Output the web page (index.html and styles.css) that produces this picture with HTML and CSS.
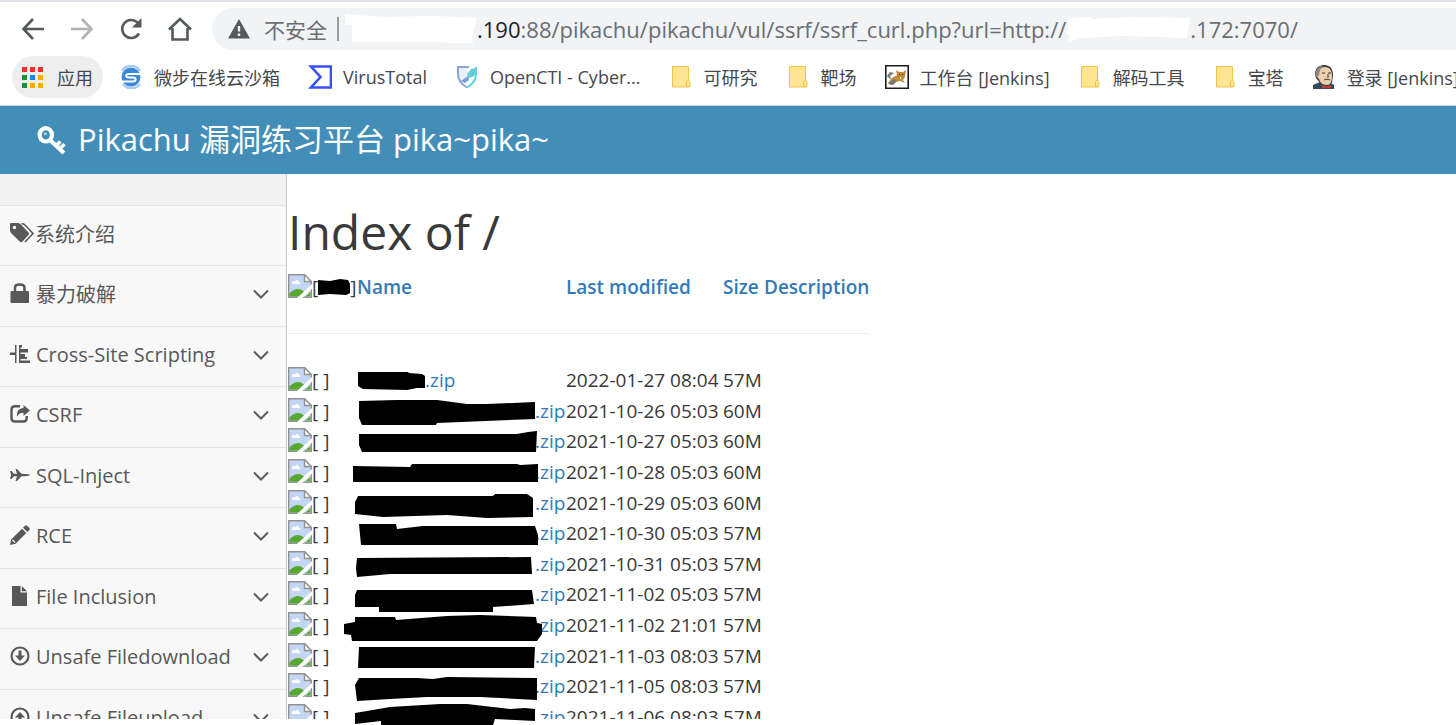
FILE: index.html
```html
<!DOCTYPE html>
<html lang="zh-CN">
<head>
  <meta charset="UTF-8">
  <meta name="viewport" content="width=device-width, initial-scale=1.0">
  <title>Pikachu</title>
  <link rel="stylesheet" href="styles.css">
</head>
<body>
  <!-- shared icons -->
  <svg class="sprite" aria-hidden="true">
    <symbol id="folder" viewBox="0 0 24 24">
      <path d="M3.5 1.5h16v14.500l1 .500v5.500h-17z" fill="#ffe591" stroke="#efc44c"/>
      <path d="M17.500 21.500v-5l1.500-1.500 2 1.500v5z" fill="#ffe591" stroke="#efc44c"/>
    </symbol>
    <symbol id="broken" viewBox="0 0 24 24">
      <path d="M.7.7h15.800l6.800 6.800v15.800H.7z" fill="#c3d6f5" stroke="#929292" stroke-width="1.400"/>
      <path d="M4 9c0-2 2-2.500 3-1.500 1-2 4-1.500 4 .500 2 0 2 2 0 2H5C3.500 10 3 9 4 9z" fill="#fff"/>
      <path d="M1.400 22.600v-3c5-6 11-6 15-1.500v4.500z" fill="#56a832"/>
      <path d="M16.500.7v6.800h6.800z" fill="#fff" stroke="#929292" stroke-width="1.400"/>
      <path d="M24 10v4.500L14.500 24H9z" fill="#fff"/>
      <path d="M24 18v6h-8z" fill="#fff"/>
      <path d="M17 23.300h6.300V18" fill="none" stroke="#929292" stroke-width="1.400"/>
      <path d="M17.500 22.600h5V18z" fill="#56a832"/>
    </symbol>
    <symbol id="chevron" viewBox="0 0 16 10">
      <path d="M1 1.500l7 7 7-7" fill="none" stroke="#5c5c5c" stroke-width="2"/>
    </symbol>
  </svg>

  <div class="toolbar">
    <button class="nav-btn" aria-label="后退"><svg viewBox="0 0 24 24"><path d="M23 12H3M12 2L2.500 12l9.500 10" class="line"/></svg></button>
    <button class="nav-btn disabled" aria-label="前进"><svg viewBox="0 0 24 24"><path d="M1 12h20M12 2l9.500 10L12 22" class="line"/></svg></button>
    <button class="nav-btn" aria-label="重新加载"><svg viewBox="0 0 24 24"><path d="M20 16.500a9 9 0 1 1-1.500-11" class="line"/><path d="M22.500 1v9.500H13z" fill="#55585c"/></svg></button>
    <button class="nav-btn" aria-label="主页"><svg viewBox="0 0 24 24"><path d="M1 12.500L12 2l11 10.500M4.500 11v11.500h15V11" class="line"/></svg></button>
    <div class="omnibox">
      <button class="security">
        <svg viewBox="0 0 22 20"><path d="M11 0l11 19.500H0z" fill="#55585c"/><path d="M9.800 7h2.400v5.500H9.800zM9.800 14.500h2.400v2.500H9.800z" fill="#f1f3f4"/></svg>
        不安全
      </button>
      <span class="divider"></span>
      <div class="url">
        <svg class="mask mask-host" viewBox="0 0 132 30"><path d="M0 0l40 3 50-1 42 2-5 20 1 5-25 0-6-1-90 0V11H0z" fill="#fff"/></svg>
        <span><b>.190</b>:88/pikachu/pikachu/vul/ssrf/ssrf_curl.php?url=http://</span>
        <svg class="mask mask-param" viewBox="0 0 124 30"><path d="M3 4l22-1v2l40-2 59 1-3 20-64-2-42 2-10 3H3v-6l-3-1z" fill="#fff"/></svg>
        <span>.172:7070/</span>
      </div>
    </div>
  </div>

  <nav class="bookmarks">
    <a class="apps" href="#">
      <svg viewBox="0 0 21 21"><path d="M0 0h5v5H0zM8 0h5v5H8zM16 0h5v5h-5z" fill="#ea3323"/><path d="M0 8h5v5H0zM0 16h5v5H0z" fill="#1e8e3e"/><path d="M8 8h5v5H8z" fill="#1a83f0"/><path d="M16 8h5v5h-5zM8 16h5v5H8zM16 16h5v5h-5z" fill="#f9ab00"/></svg>
      应用
    </a>
    <a href="#">
      <svg viewBox="0 0 24 24"><circle cx="12" cy="12" r="9.500" fill="#3f87d8"/><path d="M3 6A10.500 10.500 0 0 1 21 6M21 19A10.500 10.500 0 0 1 4 19" fill="none" stroke="#a9cdf2" stroke-width="2.500"/><path d="M22 9H10c-4 0-3.500 3.500 0 3.500h4c3.500 0 3.500 4 0 4H2" fill="none" stroke="#fff" stroke-width="2"/></svg>
      微步在线云沙箱
    </a>
    <a href="#">
      <svg viewBox="0 0 24 24"><path d="M3 1.500h20v21H3L12.500 12z" fill="none" stroke="#394eff" stroke-width="2.600"/></svg>
      VirusTotal
    </a>
    <a href="#">
      <svg viewBox="0 0 24 24"><path d="M3 2h9v12l-6 4c-2-3-3-6-3-9z" fill="#e8eefb"/><path d="M14 2H3v7c0 6 3 10 9 13.500" fill="none" stroke="#8aa2d8" stroke-width="2"/><path d="M12 22.500C18 19 21 15 21 9V2" fill="none" stroke="#58d0e6" stroke-width="2"/><path d="M21 3l-5 1-4 5 1 4 5-1 3-4zM12 12l-5 4 3 2 4-3z" fill="#65cbdc"/><path d="M13 11l-7 5 4 2 4-4z" fill="#829dd2"/></svg>
      OpenCTI - Cyber...
    </a>
    <a href="#"><svg><use href="#folder"/></svg>可研究</a>
    <a href="#"><svg><use href="#folder"/></svg>靶场</a>
    <a href="#">
      <svg viewBox="0 0 24 24"><path d="M.8.8h22.400v22.400H.8z" fill="#fff" stroke="#1c1c1c" stroke-width="1.600"/><path d="M3 18l4-5 5-3-1-5 3 2h4l3-2-1 7-2 3 2 3-5-2-4 1-4 3z" fill="#c08c3a"/><path d="M2 11l3-4 4 1-4 3 1 4zM3 19l5-5 4 2-4 4z" fill="#777"/><path d="M14 9h1v1h-1zM17 9h1v1h-1z" fill="#222"/><path d="M15 12l2 1-2 1z" fill="#fff"/></svg>
      工作台 [Jenkins]
    </a>
    <a href="#"><svg><use href="#folder"/></svg>解码工具</a>
    <a href="#"><svg><use href="#folder"/></svg>宝塔</a>
    <a href="#">
      <svg viewBox="0 0 24 24"><path d="M1 24v-4l7-3h9l5 3v4z" fill="#2f4b5e"/><path d="M4 13C1 5 6 0 12 0s9 4 9 10l-1 8-5 3-6-2z" fill="#3b3b3b"/><path d="M5 12c0-6 3-10 8-10 5 0 7 4 7 9 0 6-2 9-5 9-5 0-7-3-8-6z" fill="#eccfae"/><path d="M4 6c1-3 4-5 7-5L8 5l-1 5-1 2H4z" fill="#8a8a86"/><path d="M10 8h3M16 8h3M12 15c2-1 4-1 6 0M16 9v4" stroke="#45372c" fill="none"/><path d="M10 20l4 1.500 5-1.500v4l-5-1.500-4 1.500z" fill="#d33833"/></svg>
      登录 [Jenkins]
    </a>
  </nav>

  <header class="site-header">
    <svg class="key" viewBox="0 0 28 28"><ellipse cx="8.500" cy="8.500" rx="6" ry="6.500" fill="none" stroke="#fff" stroke-width="4"/><path d="M11.500 12.500L26 26" stroke="#fff" stroke-width="4"/><path d="M18.500 19l4-4M21.500 22.500l5-5" stroke="#fff" stroke-width="3.400"/><path d="M1.500 4l5-3.500-4 15z" fill="#fff"/><circle cx="8" cy="7.500" r="1.500" fill="#fff" opacity=".6"/></svg>
    <span>Pikachu 漏洞练习平台 pika~pika~</span>
  </header>

  <div class="page">
    <aside class="sidebar">
      <div class="sidebar-top"></div>
      <ul class="menu">
        <li><a href="#">
          <svg class="icon wide" viewBox="0 0 25 20"><path d="M0 1.500C0 .500.500 0 1.500 0H8c1 0 2 .500 3 1.500l7.500 8c.800 1 .800 1.500 0 2.500l-6 6.500c-1 1-1.800 1-2.800 0L1.500 10.500C.500 9.500 0 8.500 0 7.500z"/><circle cx="4.500" cy="4.500" r="1.700" fill="#f8f8f8"/><path d="M11.500 0.500c2 0 3 1 4 2l7.500 8-8 8.500" fill="none" stroke="#585858" stroke-width="1.600"/></svg>
          系统介绍</a></li>
        <li><a href="#">
          <svg class="icon" viewBox="0 0 20 20"><path d="M2 8h15.500c1 0 1.500.500 1.500 1.500v9c0 1-.500 1.500-1.500 1.500H2c-1 0-1.500-.500-1.500-1.500v-9C.500 8.500 1 8 2 8z"/><path d="M5 9V4.500C5 2.500 6.500 1.500 9.500 1.500S14.500 2.500 14.500 4.500V9" fill="none" stroke="#585858" stroke-width="2.500"/></svg>
          暴力破解<svg class="arrow"><use href="#chevron"/></svg></a></li>
        <li><a href="#">
          <svg class="icon" viewBox="0 0 20 20"><path d="M0 8.500h6v2.500H0zM5 1h1.500v18H5zM9 1h1.500v18H9zM10 1h2v2.500h-2zM10 5h8v3.500h-8zM10 10h5v3h-5zM10 13h7v2h-7zM9 16.500h11V19H9z"/></svg>
          Cross-Site Scripting<svg class="arrow"><use href="#chevron"/></svg></a></li>
        <li><a href="#">
          <svg class="icon" viewBox="0 0 20 20"><path d="M10 2.200H5C2.500 2.200 1.500 3.500 1.500 5.500v8.500c0 2.500 1.500 3.500 3.500 3.500h8.500c2 0 3.200-1 3.200-3.500v-2" fill="none" stroke="#585858" stroke-width="2.400"/><path d="M13.500 1l6.500 5.500-6.500 5.500V8.800c-3 0-5 1-6.500 4-.500-5.500 2-8.500 6.500-8.700z"/></svg>
          CSRF<svg class="arrow"><use href="#chevron"/></svg></a></li>
        <li><a href="#">
          <svg class="icon" viewBox="0 0 20 20"><path d="M0 6h1.500l2.500 2.800h3L5.500 4H7l4.500 4.700c4 .1 8.500.5 8.500 1.300s-4.500 1.200-8.500 1.300L7 16H5.500L7 11.200H4L1.500 14H0l1-3.500v-1z"/></svg>
          SQL-Inject<svg class="arrow"><use href="#chevron"/></svg></a></li>
        <li><a href="#">
          <svg class="icon" viewBox="0 0 20 20"><path d="M0 20l1.200-5.500L12 3.700l4.300 4.300L5.500 18.800zM13 2.700L15 .700c.700-.700 1.300-.700 2 0L19.300 3c.700.700.700 1.300 0 2l-2 2z"/><path d="M2.500 15l2.500 2.500" stroke="#f8f8f8" stroke-width="1.300"/></svg>
          RCE<svg class="arrow"><use href="#chevron"/></svg></a></li>
        <li><a href="#">
          <svg class="icon" viewBox="0 0 20 20"><path d="M2 0h8.500v6.500H17V20H2z"/><path d="M11.800 0L17 5.200h-5.200z"/></svg>
          File Inclusion<svg class="arrow"><use href="#chevron"/></svg></a></li>
        <li><a href="#">
          <svg class="icon" viewBox="0 0 20 20"><circle cx="10" cy="10" r="8.500" fill="none" stroke="#585858" stroke-width="2.200"/><path d="M8.500 4.500h3V9.500h3.500L10 15 5 9.500h3.500z"/></svg>
          Unsafe Filedownload<svg class="arrow"><use href="#chevron"/></svg></a></li>
        <li><a href="#">
          <svg class="icon" viewBox="0 0 20 20"><circle cx="10" cy="10" r="8.500" fill="none" stroke="#585858" stroke-width="2.200"/><path d="M8.500 15.500h3V10.500h3.500L10 5 5 10.500h3.500z"/></svg>
          Unsafe Fileupload<svg class="arrow"><use href="#chevron"/></svg></a></li>
      </ul>
    </aside>

    <main class="content">
      <h1>Index of /</h1>
      <table class="listing">
        <colgroup>
          <col class="col-icon"><col class="col-name"><col class="col-date"><col class="col-size"><col class="col-desc">
        </colgroup>
        <thead>
          <tr>
            <th><div class="cell"><svg class="broken"><use href="#broken"/></svg>[<svg class="blot blot-ico" viewBox="0 0 32 30"><path d="M0 8l12 1 10-2 8 1 2 4v9l-4 2-16-1-12 1z"/></svg>]</div></th>
            <th><a href="#">Name</a></th>
            <th><a href="#">Last modified</a></th>
            <th><a href="#">Size</a></th>
            <th><a href="#">Description</a></th>
          </tr>
          <tr><td colspan="5"><hr></td></tr>
        </thead>
        <tbody>
          <tr>
            <td><div class="cell"><svg class="broken"><use href="#broken"/></svg>[ ]</div></td>
            <td><a class="cell" href="#"><svg class="blot short" viewBox="0 0 68 30"><path d="M1 7h50l1 1 13 1 3 2v12h-8l-10 2-44-1-5-3z"/></svg>.zip</a></td>
            <td>2022-01-27 08:04</td><td>57M</td><td></td>
          </tr>
          <tr>
            <td><div class="cell"><svg class="broken"><use href="#broken"/></svg>[ ]</div></td>
            <td><a class="cell" href="#"><svg class="blot" viewBox="0 0 178 30"><path d="M2 5L40 4h40l30 4h20l48-2v17l-98 4-1 2H5l-3-7z"/></svg>.zip</a></td>
            <td>2021-10-26 05:03</td><td>60M</td><td></td>
          </tr>
          <tr>
            <td><div class="cell"><svg class="broken"><use href="#broken"/></svg>[ ]</div></td>
            <td><a class="cell" href="#"><svg class="blot" viewBox="0 0 178 30"><path d="M2 8h158l11-2 9-1-1 21H5l-3-7z"/></svg>.zip</a></td>
            <td>2021-10-27 05:03</td><td>60M</td><td></td>
          </tr>
          <tr>
            <td><div class="cell"><svg class="broken"><use href="#broken"/></svg>[ ]</div></td>
            <td><a class="cell" href="#"><svg class="blot" viewBox="0 0 178 30"><path d="M-4 9l57 1 2-3h105l3 1 18-1v18H-4z"/></svg>.zip</a></td>
            <td>2021-10-28 05:03</td><td>60M</td><td></td>
          </tr>
          <tr>
            <td><div class="cell"><svg class="broken"><use href="#broken"/></svg>[ ]</div></td>
            <td><a class="cell" href="#"><svg class="blot" viewBox="0 0 178 30"><path d="M1 8h135l2-2h32l6 4v19l-46 1-40-3-64 2-28-3V14z"/></svg>.zip</a></td>
            <td>2021-10-29 05:03</td><td>60M</td><td></td>
          </tr>
          <tr>
            <td><div class="cell"><svg class="broken"><use href="#broken"/></svg>[ ]</div></td>
            <td><a class="cell" href="#"><svg class="blot" viewBox="0 0 178 30"><path d="M2 6h37l1 5 26-3h112l3 9v10H4z"/></svg>.zip</a></td>
            <td>2021-10-30 05:03</td><td>57M</td><td></td>
          </tr>
          <tr>
            <td><div class="cell"><svg class="broken"><use href="#broken"/></svg>[ ]</div></td>
            <td><a class="cell" href="#"><svg class="blot" viewBox="0 0 178 30"><path d="M0 9l174-1 1 17H33L0 28l-1-9z"/></svg>.zip</a></td>
            <td>2021-10-31 05:03</td><td>57M</td><td></td>
          </tr>
          <tr>
            <td><div class="cell"><svg class="broken"><use href="#broken"/></svg>[ ]</div></td>
            <td><a class="cell" href="#"><svg class="blot" viewBox="0 0 178 30"><path d="M0 11h175l2 14-41 3v5H22v-5H-2V16z"/></svg>.zip</a></td>
            <td>2021-11-02 05:03</td><td>57M</td><td></td>
          </tr>
          <tr>
            <td><div class="cell"><svg class="broken"><use href="#broken"/></svg>[ ]</div></td>
            <td><a class="cell" href="#"><svg class="blot" viewBox="0 0 178 30"><path d="M-2 7h40l1 3 51-4 33-1 56 2 1 6 5 1v10l-5 7H-5l-1-6-7-1V14l11-2z"/></svg>.zip</a></td>
            <td>2021-11-02 21:01</td><td>57M</td><td></td>
          </tr>
          <tr>
            <td><div class="cell"><svg class="broken"><use href="#broken"/></svg>[ ]</div></td>
            <td><a class="cell" href="#"><svg class="blot" viewBox="0 0 178 30"><path d="M2 6h176l-1 21H1z"/></svg>.zip</a></td>
            <td>2021-11-03 08:03</td><td>57M</td><td></td>
          </tr>
          <tr>
            <td><div class="cell"><svg class="broken"><use href="#broken"/></svg>[ ]</div></td>
            <td><a class="cell" href="#"><svg class="blot" viewBox="0 0 178 30"><path d="M2 7h58l16 1 14-2 90 1v22l-57-3H70l-37 2-33 2-2-16z"/></svg>.zip</a></td>
            <td>2021-11-05 08:03</td><td>57M</td><td></td>
          </tr>
          <tr>
            <td><div class="cell"><svg class="broken"><use href="#broken"/></svg>[ ]</div></td>
            <td><a class="cell" href="#"><svg class="blot" viewBox="0 0 178 30"><path d="M-2 11l35-6 50-3h27l43 5 15-1 10 1v12l-40-2-2 6H24v-4l-26 3z"/></svg>.zip</a></td>
            <td>2021-11-06 08:03</td><td>57M</td><td></td>
          </tr>
        </tbody>
      </table>
    </main>
  </div>
</body>
</html>
```
FILE: styles.css
```css
:root {
  --header: #438eb9;
  --link: #337ab7;
  --icon: #585858;
  --line: #e5e5e5;
}

* {
  margin: 0;
  padding: 0;
  box-sizing: border-box;
}

body {
  height: 100vh;
  display: flex;
  flex-direction: column;
  overflow: hidden;
  background: #fff;
  color: #393939;
  font-family: "Open Sans", "Noto Sans CJK SC", sans-serif;
  font-size: 19px;
}

/* bottom edge of the window */
body::after {
  content: "";
  position: fixed;
  left: 0;
  right: 0;
  bottom: 0;
  height: 6px;
  background: #fff;
}

a {
  color: var(--link);
  text-decoration: none;
}

button {
  border: none;
  background: none;
  font: inherit;
  color: inherit;
  cursor: pointer;
}

svg {
  flex-shrink: 0;
}

.sprite {
  position: absolute;
  width: 0;
  height: 0;
}

/* browser toolbar */
.toolbar {
  flex-shrink: 0;
  display: flex;
  align-items: center;
  height: 56px;
  padding-left: 21px;
  border-top: 2px solid #dee1e6;
}

.nav-btn {
  width: 24px;
  height: 24px;
  margin-right: 25px;
}

.nav-btn svg {
  display: block;
  width: 24px;
  height: 24px;
}

.nav-btn .line {
  fill: none;
  stroke: #55585c;
  stroke-width: 2.600;
}

.nav-btn.disabled {
  opacity: 0.45;
}

.omnibox {
  flex: 1;
  min-width: 0;
  height: 42px;
  margin-left: -5px;
  padding-left: 16px;
  display: flex;
  align-items: center;
  background: #f1f3f4;
  border-radius: 21px 0 0 21px;
  color: #6b6e72;
  font-size: 22px;
  white-space: nowrap;
}

.security {
  display: flex;
  align-items: center;
  gap: 14px;
  font-size: 21px;
}

.security svg {
  width: 22px;
  height: 20px;
}

.divider {
  width: 2px;
  height: 24px;
  margin: 0 6px 0 10px;
  background: #9a9da1;
}

.url {
  display: flex;
  align-items: center;
}

.url b {
  font-weight: 400;
  color: #202124;
}

.mask {
  height: 30px;
}

.mask-host {
  width: 132px;
}

.mask-param {
  width: 124px;
}

/* bookmarks */
.bookmarks {
  flex-shrink: 0;
  display: flex;
  align-items: flex-start;
  gap: 28px;
  height: 50px;
  padding-left: 12px;
  border-bottom: 1px solid #c8d3da;
  font-size: 18px;
  white-space: nowrap;
  overflow: hidden;
}

.bookmarks a {
  flex-shrink: 0;
  display: flex;
  align-items: center;
  gap: 11px;
  height: 42px;
  color: #45484c;
}

.bookmarks svg {
  width: 24px;
  height: 24px;
}

.bookmarks .apps {
  gap: 14px;
  margin-right: -12px;
  padding: 0 10px;
  background: #eee;
  border-radius: 21px;
}

.bookmarks .apps svg {
  width: 21px;
  height: 21px;
}

/* site header */
.site-header {
  flex-shrink: 0;
  display: flex;
  align-items: center;
  gap: 12px;
  height: 68px;
  padding: 0 0 6px 37px;
  background: var(--header);
  color: #fff;
  font-size: 31px;
}

.key {
  width: 29px;
  height: 29px;
  margin-top: 6px;
}

.page {
  flex: 1;
  min-height: 0;
  display: flex;
}

/* sidebar */
.sidebar {
  flex: 0 0 287px;
  background: #f2f2f2;
  border-right: 1px solid #ccc;
  overflow: hidden;
}

.sidebar-top {
  height: 31px;
}

.menu {
  list-style: none;
}

.menu li {
  height: 61px;
  border-top: 1px solid var(--line);
  background: #f8f8f8;
}

.menu li:nth-child(odd) {
  height: 60px;
}

.menu a {
  display: flex;
  align-items: center;
  height: 54px;
  padding: 0 17px 0 10px;
  color: var(--icon);
  font-size: 20px;
}

.icon {
  width: 20px;
  height: 20px;
  margin-right: 6px;
  fill: var(--icon);
}

.icon.wide {
  width: 25px;
  margin-right: 0;
}

.arrow {
  width: 16px;
  height: 10px;
  margin-top: 2px;
  margin-left: auto;
}

/* directory listing */
.content {
  flex: 1;
  min-width: 0;
  padding-left: 1px;
}

h1 {
  height: 98px;
  padding-top: 24px;
  font-size: 48px;
  font-weight: 400;
  line-height: 68px;
}

.listing {
  width: 582px;
  table-layout: fixed;
  border-collapse: collapse;
  white-space: nowrap;
}

.col-icon {
  width: 69px;
}

.col-name {
  width: 209px;
}

.col-date {
  width: 157px;
}

.col-size {
  width: 41px;
}

.col-desc {
  width: 106px;
}

.listing tr {
  height: 31px;
}

.listing tbody tr:nth-child(5n+2),
.listing tbody tr:nth-child(5n) {
  height: 30px;
}

.listing th,
.listing td {
  line-height: 30px;
  text-align: left;
  vertical-align: top;
}

.listing th {
  font-weight: 600;
  line-height: 31px;
}

.listing .cell {
  display: flex;
  height: 30px;
  font-weight: 400;
}

.listing hr {
  height: 1px;
  margin: 30px 0 31px;
  border: none;
  background: #eee;
}

.broken {
  width: 24px;
  height: 24px;
  margin-top: 2px;
}

/* marker over the hidden names */
.blot {
  position: relative;
  z-index: 1;
  width: 178px;
  height: 30px;
  fill: #000;
  overflow: visible;
}

.blot.short {
  width: 68px;
}

.blot-ico {
  width: 32px;
}
```
